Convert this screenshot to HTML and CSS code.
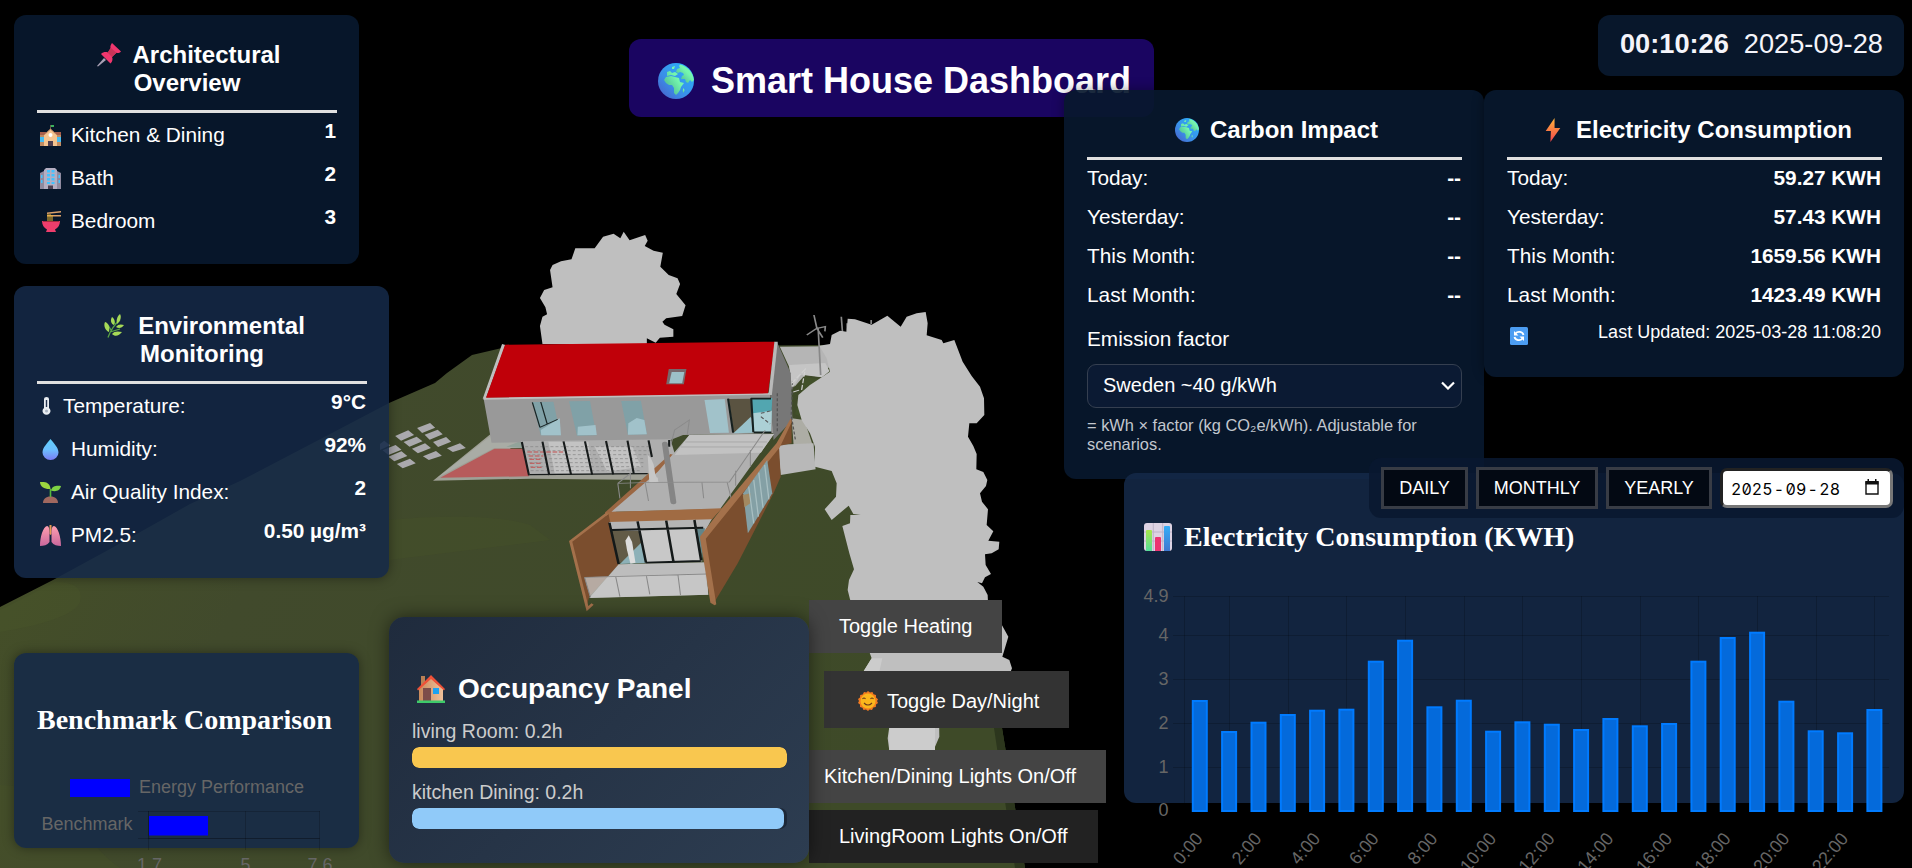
FILE: index.html
```html
<!DOCTYPE html>
<html lang="en">
<head>
<meta charset="utf-8">
<title>Smart House Dashboard</title>
<link rel="stylesheet" href="styles.css">
</head>
<body>
<svg class="defs" width="0" height="0">
  <defs>
    <linearGradient id="gSea" x1="1" y1="0" x2="0" y2="1"><stop offset="0" stop-color="#29b6ff"/><stop offset=".6" stop-color="#3a8fe8"/><stop offset="1" stop-color="#4a5bc8"/></linearGradient>
    <linearGradient id="gLand" x1="1" y1="0" x2="0" y2="1"><stop offset="0" stop-color="#7dffb0"/><stop offset=".4" stop-color="#74f5ae"/><stop offset="1" stop-color="#3fa58a"/></linearGradient>
    <linearGradient id="gBolt" x1="0" y1="0" x2="0" y2="1"><stop offset="0" stop-color="#ffb53a"/><stop offset="1" stop-color="#f5444d"/></linearGradient>
    <linearGradient id="gDrop" x1="0" y1="0" x2="0" y2="1"><stop offset="0" stop-color="#5fd0fb"/><stop offset=".5" stop-color="#6cc0ff"/><stop offset="1" stop-color="#7a7cf5"/></linearGradient>
    <linearGradient id="gLung" x1="0" y1="0" x2="0" y2="1"><stop offset="0" stop-color="#ff9fb0"/><stop offset="1" stop-color="#c9679c"/></linearGradient>
    <linearGradient id="gWall" x1="0" y1="0" x2="1" y2="0"><stop offset="0" stop-color="#c98a5c"/><stop offset="1" stop-color="#efc09a"/></linearGradient>
    <linearGradient id="gGreenBar" x1="0" y1="0" x2="0" y2="1"><stop offset="0" stop-color="#a8e84a"/><stop offset="1" stop-color="#55dd9a"/></linearGradient>
    <linearGradient id="gBlueBar" x1="0" y1="0" x2="0" y2="1"><stop offset="0" stop-color="#35aef8"/><stop offset="1" stop-color="#3f78d0"/></linearGradient>
  </defs>
  <symbol id="globe" viewBox="0 0 36 36">
    <circle cx="18" cy="18" r="18" fill="url(#gSea)"/>
    <path fill="url(#gLand)" d="M22 1.500C29 3 35 9 36 17l-2 2-2-2-2 3-2-1-1-3h-4l1-3 2-1-1-2-3-1-2 1-2-1 1-3 3-1-1-2z"/>
    <path fill="url(#gLand)" d="M14 4l3-1-1 3-2 0zM9 9l3-1 2 2 3-1 3 2-3 2-4-1-4 1zM8 14l5-1 4 1 4 1 1 4 4 1-3 4-1 3-2 3-2 2-2-2 0-5-2-3-3 0-3-2-2-3z"/>
    <path fill="url(#gLand)" d="M25.500 25l1 2-1 3-1-2z"/>
  </symbol>
  <symbol id="pin" viewBox="0 0 24 24">
    <path d="M1 23.500L0 23l7-8 2 2z" fill="#a9a0b4"/>
    <path d="M4 11c2-2 5-2.500 7-1.500L13.500 5c-.5-1.500.3-3.500 1.500-5L24 8.500c-1.500 1.500-3 1.800-4.500 1.300L15 14c1 2 .5 4.500-1.500 6.500z" fill="#f0376e"/>
    <path d="M10.500 9.500L14 5l5.500 4.800L15 14z" fill="#c93458"/>
  </symbol>
  <symbol id="leaf" viewBox="0 0 24 24">
    <path d="M5 23.500C8 15 12 10 17 6M7 18l10-3M8 16L5 11M12 10l-2-5" stroke="#59a344" stroke-width="1.300" fill="none"/>
    <g fill="#a6d957"><path d="M2 8c4 1 5 6 4 10-3-1-6-6-4-10zM9 3c3 2 3 5 2 8-3-1-4-5-2-8zM17 0c2 3 0 8-3 10-1-3 0-8 3-10zM13 13c2-3 5-3 8-2-2 3-5 4-8 2zM9 20c2-3 6-3 10-2-3 4-7 5-10 2z"/></g>
  </symbol>
  <symbol id="school" viewBox="0 0 21 21">
    <path d="M11 0h3v2h-3z" fill="#3cb35c"/><path d="M10.500 0v5" stroke="#775" stroke-width=".8"/>
    <path d="M0 9h21v12H0z" fill="#c08b62"/><path d="M0 7h6v3H0zM15 7h6v3h-6z" fill="#a85f4b"/>
    <path d="M4 10l6.500-6L17 10v11H4z" fill="#f5c48f"/><path d="M4 10l6.500-6L17 10" stroke="#bd805d" fill="none"/>
    <path d="M0 12h4v5H0zM17 12h4v5h-4z" fill="#46bdf2"/><path d="M8 16h5v5H8z" fill="#4d3d4e"/><circle cx="10.500" cy="10" r="2" fill="#fff"/>
  </symbol>
  <symbol id="office" viewBox="0 0 21 21">
    <path d="M0 5l4-2h13l4 2v16H0z" fill="#8f8a9f"/><path d="M4 2l2-2h9l2 2v19H4z" fill="#b4aec2"/>
    <path d="M7 2h3v2.500H7zM11.500 2h3v2.500h-3zM7 6h3v2.500H7zM11.500 6h3v2.500h-3zM7 10h3v2.500H7zM11.500 10h3v2.500h-3zM7 14h3v2H7zM11.500 14h3v2h-3zM1 7h1.500v3H1zM1 12h1.500v3H1zM18.500 7H20v3h-1.500zM18.500 12H20v3h-1.500z" fill="#41c3ff"/>
    <path d="M8 17.500h5V21H8z" fill="#4a4052"/>
  </symbol>
  <symbol id="noodles" viewBox="0 0 21 21">
    <path d="M7 1.500L21 0v1.500L7 3zM7 4h14v1.500L7 5.500z" fill="#d9a06b"/><path d="M8 3v8M10 3v8M12 4v7" stroke="#f0b82e" stroke-width="1"/>
    <path d="M2 10h18c0 4-2 7-5 8.500l1 2.500H6l1-2.500C4 17 2 14 2 10z" fill="#ee3d6c"/><path d="M3 10h16v1H3z" fill="#a82c3e"/>
  </symbol>
  <symbol id="thermo" viewBox="0 0 8 18">
    <path d="M1.500 2a2.500 2 0 015 0v9a4 3.800 0 11-5 0z" fill="#e9edf2"/><path d="M4 3v7" stroke="#24344f" stroke-width="1.400"/><circle cx="4" cy="14" r="1.500" fill="#aab4c2"/>
  </symbol>
  <symbol id="drop" viewBox="0 0 16 21"><path d="M8 0c3 4 8 8.500 8 13.500a8 7.500 0 01-16 0C0 8.500 5 4 8 0z" fill="url(#gDrop)"/></symbol>
  <symbol id="sprout" viewBox="0 0 21 21">
    <path d="M3 21c0-4 3-6.500 7.500-6.500S18 17 18 21z" fill="#a0685f"/><path d="M10.500 15V7" stroke="#57b83e" stroke-width="1.600"/>
    <path d="M0 0c6-.5 10 1 10.500 7C5 7.500 0 5 0 0z" fill="#9bd63f"/><path d="M21 4c-5-.5-9 0-10 4.500 4.500 1.500 9 .5 10-4.500z" fill="#7ed344"/>
  </symbol>
  <symbol id="lungs" viewBox="0 0 21 21">
    <path d="M9.500 0h2v9l-1 1-1-1z" fill="#e79c52"/>
    <path d="M7 1c2 0 2.500 3 2.500 7v9c-2 3-6 4-9.500 4C0 12 3 2 7 1zM14 1c-2 0-2.500 3-2.500 7v9c2 3 6 4 9.500 4 0-9-3-19-7-20z" fill="url(#gLung)"/>
  </symbol>
  <symbol id="bolt" viewBox="0 0 14 23"><path d="M8.500 0L0 12.500h5L4.500 23 14 9.500H8.500z" fill="url(#gBolt)"/></symbol>
  <symbol id="refresh" viewBox="0 0 18 18">
    <rect width="18" height="18" rx="1.500" fill="#4c9df2"/>
    <path d="M5.500 6.500A4.500 4 0 0113.500 8M12.500 11.500A4.500 4 0 014.500 10" stroke="#fff" stroke-width="1.800" fill="none"/><path d="M4 4v4.500h4.500zM14 14V9.500H9.500z" fill="#fff"/>
  </symbol>
  <symbol id="chartIcon" viewBox="0 0 28 28">
    <rect width="28" height="28" rx="3" fill="#ddd3e3"/><path d="M9.300 0v28M18.700 0v28M0 9h28M0 18h28" stroke="#bfb4c8" stroke-width="1"/>
    <path d="M2 8q0-1 1-1h4q1 0 1 1v20H2z" fill="url(#gGreenBar)"/><path d="M11 15q0-1 1-1h4q1 0 1 1v13h-6z" fill="#ec3470"/><path d="M20 4q0-1 1-1h4q1 0 1 1v24h-6z" fill="url(#gBlueBar)"/>
  </symbol>
  <symbol id="home" viewBox="0 0 28 28">
    <path d="M4 1h4v10H4z" fill="#b98055"/><path d="M2 14L14 3l12 11v12H2z" fill="url(#gWall)"/>
    <path d="M0 14L14 0l14 14-1 1.500L14 4 1 15.500z" fill="#ef5138"/><path d="M6 13h8v13H6z" fill="#7d4d4a"/><path d="M16 13h6v6h-6z" fill="#1ca2f2"/><path d="M0 25.500h28V28H0z" fill="#3ecb6a"/>
  </symbol>
  <symbol id="sun" viewBox="0 0 20 20">
    <path d="M10 0l2 1.500L14.500 1l1 2.300 2.500.7v2.600l2 1.600L19 10l1 2-2 1.500-.2 2.500-2.500.6L14 19l-2.300-.5L10 20l-2-1.500-2.500.5-1-2.300L2 16v-2.600L0 12l1-2-1-2 2-1.500L2.200 4l2.500-.6L6 1l2.300.5z" fill="#f47b20"/>
    <circle cx="10" cy="10" r="7.500" fill="#fbb61c"/><path d="M4.500 8q1.500-2 3 0M12.500 8q1.500-2 3 0M6 12q4 4 8 0" stroke="#6b3b1c" stroke-width="1.100" fill="none"/>
  </symbol>
</svg>

<svg class="scene" viewBox="0 0 1912 868">
  <defs><linearGradient id="grass" x1="0" y1="0" x2="1" y2=".3"><stop offset="0" stop-color="#465126"/><stop offset=".35" stop-color="#414a2c"/><stop offset="1" stop-color="#3e4a28"/></linearGradient></defs>
  <path fill="url(#grass)" d="M0 607L53 580 110 549 190 504 240 481 330 434 389 403 435 383 447 373 472 355 502 348 830 345 960 600 1002 728 1025 868H0z"/>
  <path fill="#48542a" opacity=".5" d="M0 610L55 582q30 0 25 20-8 18-80 30z"/>
  <path fill="#475228" opacity=".35" d="M389 520C440 515 500 515 530 525L550 540 389 560zM0 785q60 0 80 40 20 30 40 43H0z"/>
  <path fill="#2c361d" d="M994 728h8l23 140h-10z"/>
  <g transform="translate(380 200) scale(.42089 .33333)">
    <path fill="#bfbfbf" d="M386 432L380 378 386 350 397 343 393 322 380 294 390 270 410 262 404 210 410 195 430 184 455 178 464 145 510 145 530 110 555 101 571 115 579 95 593 121 630 105 636 122 629 138 650 152 672 158 666 200 686 225 707 235 713 252 704 282 726 316 718 348 680 355 671 365 676 374 697 388 697 410 665 413 655 428 634 415V434z"/>
    <path fill="#b5b5b5" d="M950 440L1060 439 1068 500 1045 530 1010 524 985 560 972 500z"/><path fill="#c5c5c5" d="M972 495l86-6 10 25-18 18-50-8-22 45z"/>
    <path fill="#41502a" d="M1010 530l34 8-34 45-4 70-20-10z"/>
    <path fill="#adada5" d="M978 655l30 5 20 75-45 5z"/>
    <path fill="#b8b8b8" d="M945 734l85-4 5 78-83 17z"/>
    <g stroke="#888" stroke-width="4" fill="none"><path d="M1041 385l6 140M1031 345l7 40-24 20M1038 385l20-5-1 14M1038 385l14 28M1096 350l3 50M1110 370v30M1167 360v12"/></g>
    <g fill="#aaa9ad">
      <path d="M88 684l31-15 12 14-31 16zM106 704l31-15 12 14-31 16zM126 726l31-15 12 14-31 16zM159 745l31-15 14 14-31 12zM36 708l31-17 14 14-31 17zM56 726l31-16 14 14-31 16zM76 746l31-16 14 14-31 16zM102 769l31-16 14 14-31 13zM0 732l10-10 14 14-24 14zM6 751l31-16 14 14-31 16zM20 770l31-16 14 14-31 16zM40 792l31-16 14 14-31 15z"/>
    </g>
    <path fill="#9fa096" d="M265 700L126 842 360 836 640 840 655 820 360 825 300 730z"/>
    <path fill="#a9aca5" d="M265 706L138 832 270 745 335 744V720z"/>
    <path fill="#b75b5b" d="M272 746H340L354 829 143 833z"/><path fill="#92a39a" d="M300 740l30-15h10v20z"/>
    <path fill="#999" d="M246 595L927 580 935 700 720 705 690 720 265 728z"/>
    <path fill="#aeaeae" d="M335 724L690 718 700 760 640 820 355 826z"/>
    <path fill="#d0d0d0" opacity=".6" d="M400 725h95l10 95h-90zM510 740h90l20 60-80 15z"/>
    <g stroke="#8a8a8a" stroke-width="2" stroke-dasharray="7 5"><path d="M345 740H640M350 752H650M350 764H640M354 776H630M355 788H630M357 800H625M358 812H620"/></g>
    <g stroke="#c34f4f" stroke-width="3" stroke-dasharray="11 4"><path d="M350 756h85M353 768h35M355 778h30M356 790h28M358 802h26"/></g>
    <g stroke="#171b1b" stroke-width="5" fill="none"><path d="M337 726l17 100M386 725l16 100M436 724l18 100M487 724l17 100M537 723l17 100M588 722l15 100M638 721l8 50M687 720v20"/><path d="M356 824l280-3" stroke-width="4"/></g>
    <path fill="#bfbfbf" d="M290 432l8 3-46 158-8 3zM246 592L928 578v6L246 599z"/>
    <path fill="#c00009" d="M297 434L938 425 922 580 252 593z"/>
    <path fill="#777" d="M943 425L976 520 980 660 935 720 927 580z"/><path fill="#b9b9b9" d="M937 425h8l-14 160h-8z"/>
    <path fill="#77676b" d="M686 507h42l-6 46h-42z"/><path fill="#9cc0c8" d="M693 516h30l-5 34h-31z"/>
    <g fill="#80a1a7"><path d="M362 606l50-1 17 101h-47zM449 604l50-1 15 103-46 1zM573 603l47-1 14 101-45 1z"/></g><g fill="#a1c2ca"><path d="M382 690l45-35 3 51h-47zM470 680l42-5 3 30-46 1zM590 670l20-16 18 6 6 43-45 1zM771 600l48-3 10 101-45 1z"/></g>
    <path stroke="#192525" stroke-width="3" fill="none" d="M382 606l15 65M380 682l42-24M362 607l18 75"/>
    <path fill="#5a5341" d="M829 597l52-1 2 57-43 46z"/><path fill="#99c2cb" d="M840 700l41-50 5 48z"/><path fill="#52a6b0" d="M882 596l50-2-4 100-40 2z"/><path fill="#acd0d5" d="M886 640l45-8-2 65-40 1z"/>
    <path stroke="#16201f" stroke-width="5" fill="none" d="M827 596l12 102M882 595l5 102M881 596h48M888 697h42"/>
    <path stroke="#555" stroke-width="3" stroke-dasharray="9 6" fill="none" d="M944 580v115M980 545l-3 100 10 75M905 640l25-8M905 650l22 22"/>
    <path stroke="#d1d1d1" stroke-width="3" fill="none" stroke-dasharray="15 5" d="M978 550l32-42-8 60-25 10"/>
    <path fill="#9b6743" d="M690 762L706 768 560 935 812 925 786 962 540 969 535 937z"/>
    <path fill="#b0b0b0" d="M735 705L936 702 808 927 550 935 660 815z"/><path fill="#c2c2c2" d="M735 705L936 702 905 758 700 765zM646 830l15 3-2 14-18 2z"/><path stroke="#a1a1a1" stroke-width="2" d="M725 726h195M715 741h195"/>
    <path fill="#c7c7c7" d="M636 765l7 8 7 20 4 30 8 22-22 4z"/><path stroke="#858585" stroke-width="14" stroke-linecap="round" d="M677 732l20 174"/>
    <g stroke="#8a8a8a" stroke-width="2.500" fill="none"><path d="M565 850l80-3 185-1 85-155M565 850l5 45M630 848l8 55M765 848l4 47M825 848l10 50M845 812v45M880 750v50M690 740l10-50 35-30-5 45M565 850l30-30v45"/></g>
    <path fill="#a06b43" d="M535 937L812 925 786 960 540 967z"/>
    <path fill="#7b4e2e" d="M452 1024L543 942 567 1094 497 1190 490 1224z"/><path stroke="#a4714b" stroke-width="7" fill="none" d="M540 940L453 1024 493 1226 505 1212"/>
    <path fill="#b5b5b5" d="M544 966L788 958 766 1008 550 990z"/><path fill="#625b47" d="M552 992h62l12 55-60 45z"/><path fill="#8db1b8" d="M570 1092l54-68 10 65z"/><path fill="#61858a" d="M752 985h20l-6 90z"/><path fill="#c8c8c8" d="M618 992l130-6 18 98-132 5z"/>
    <path stroke="#141919" stroke-width="6" fill="none" d="M545 968l22 124M612 964l20 124M680 962l17 122M747 960l16 122M550 990l218-7M632 1088l130-5"/>
    <path fill="#ddd" d="M583 1022l8-16 8 20 8 62-12 3-8-40z"/>
    <path fill="#bdbdbd" d="M567 1093L775 1087 780 1184 497 1194z"/><path fill="#cacaca" d="M486 1132l286-12 8 64-280 9z" opacity=".75"/><path stroke="#888" stroke-width="2.500" fill="none" d="M486 1132L775 1122M486 1132l14 60M560 1130l10 60M633 1128l8 55M708 1125l6 60"/>
    <path fill="#7b4e2e" d="M764 1012L812 930 945 735 978 656V730L948 738 952 830 935 880 850 1090 792 1212z"/><path fill="#a4714b" d="M760 1010l52-85 130-195 34-75 2 12-28 75-176 274 25 197-4 3-10-8z"/>
    <path fill="#84a0a5" d="M863 880L920 780 932 880 874 1000z"/><path fill="#a38961" d="M862 885l18-5v30l-14 12z"/><path stroke="#a8bfc2" stroke-width="3" d="M876 860l12 110M888 840l11 110M900 818l10 105M914 795l10 103"/>
  </g>
  <g transform="translate(780 290) scale(.33333)">
    <path fill="#bfbfbf" d="M118 167L150 162 155 135 180 122 200 125 203 86 225 88 275 104 322 77 362 110 380 80 410 70 437 66 443 100 440 136 485 150 490 160 523 150 548 215 575 258 600 290 612 325 613 375 590 400 568 400 564 440 580 468 590 492 589 538 610 546 622 570 618 588 600 610 606 635 624 658 620 705 640 724 625 752 658 755 656 778 635 790 615 793 617 825 633 852 615 862 606 880 592 876 610 890 623 915 625 960 664 1002 685 1040 667 1100 688 1110 696 1135 690 1150H475L478 1340 460 1382H328L323 1345 328 1310 250 1145 275 1105 210 928 203 900 207 870 222 838 208 790 187 708 210 700 211 675 242 675 220 672 206 647 155 690 134 658 168 620 170 580 155 543 105 530V470L90 430 65 390 52 345 55 315 90 285 150 245 140 205z"/>
    <path fill="#ccc" d="M275 1105h32l-10 45h-50zM328 1310H465V1382H328z"/>
  </g>
</svg>

<main class="hud">
  <h1 class="banner"><svg class="i36"><use href="#globe"/></svg>Smart House Dashboard</h1>

  <section class="col-left">
    <div class="panel deep arch">
      <h3><svg class="i24"><use href="#pin"/></svg>Architectural<br>Overview</h3>
      <div class="row tall"><span class="label"><svg class="i21"><use href="#school"/></svg>Kitchen &amp; Dining</span><b>1</b></div>
      <div class="row tall"><span class="label"><svg class="i21"><use href="#office"/></svg>Bath</span><b>2</b></div>
      <div class="row tall"><span class="label"><svg class="i21"><use href="#noodles"/></svg>Bedroom</span><b>3</b></div>
    </div>
    <div class="panel navy env">
      <h3><svg class="i24"><use href="#leaf"/></svg>Environmental<br>Monitoring</h3>
      <div class="row tall"><span class="label narrow"><svg class="i21"><use href="#thermo"/></svg>Temperature:</span><b>9°C</b></div>
      <div class="row tall"><span class="label"><svg class="i21"><use href="#drop"/></svg>Humidity:</span><b>92%</b></div>
      <div class="row tall"><span class="label"><svg class="i21"><use href="#sprout"/></svg>Air Quality Index:</span><b>2</b></div>
      <div class="row tall"><span class="label"><svg class="i21"><use href="#lungs"/></svg>PM2.5:</span><b>0.50 µg/m³</b></div>
    </div>
    <div class="panel navy bench">
      <h3 class="serif">Benchmark Comparison</h3>
      <svg class="bench-chart" width="300" height="120">
        <rect x="33" y="14" width="60" height="18" fill="#00f"/>
        <text x="102" y="28">Energy Performance</text>
        <text x="4.500" y="65">Benchmark</text>
        <path class="grid" d="M101 46.500h182M101 73.500h182M111.500 46v39M208.500 46v39M282.500 46v39"/>
        <path class="grid" d="M111.500 46v27.500h171"/>
        <rect x="112" y="51" width="59" height="19.500" fill="#00f"/>
        <g text-anchor="middle"><text x="112.500" y="106">1.7</text><text x="208.500" y="106">5</text><text x="283" y="106">7.6</text></g>
      </svg>
    </div>
  </section>

  <section class="occupancy">
    <h3><svg class="i28"><use href="#home"/></svg>Occupancy Panel</h3>
    <p>living Room: 0.2h</p>
    <div class="track"><div class="fill amber" style="width:100%"></div></div>
    <p>kitchen Dining: 0.2h</p>
    <div class="track"><div class="fill sky" style="width:99.2%"></div></div>
  </section>

  <section class="actions">
    <button class="heat">Toggle Heating</button>
    <button class="day"><svg class="i20"><use href="#sun"/></svg>Toggle Day/Night</button>
    <button class="kitchen">Kitchen/Dining Lights On/Off</button>
    <button class="living">LivingRoom Lights On/Off</button>
  </section>

  <section class="col-right">
    <div class="clock"><b>00:10:26</b><span>2025-09-28</span></div>
    <div class="stats">
      <div class="panel deep carbon">
        <h3><svg class="i24"><use href="#globe"/></svg>Carbon Impact</h3>
        <div class="row"><span>Today:</span><b>--</b></div>
        <div class="row"><span>Yesterday:</span><b>--</b></div>
        <div class="row"><span>This Month:</span><b>--</b></div>
        <div class="row"><span>Last Month:</span><b>--</b></div>
        <div class="factor">Emission factor</div>
        <div class="select"><span>Sweden ~40 g/kWh</span><svg width="14" height="9" viewBox="0 0 14 9"><path d="M1 1.500l6 6 6-6" stroke="#fff" stroke-width="2.200" fill="none"/></svg></div>
        <p class="note">= kWh × factor (kg CO₂e/kWh). Adjustable for scenarios.</p>
      </div>
      <div class="panel deep elec">
        <h3><svg class="i24"><use href="#bolt"/></svg>Electricity Consumption</h3>
        <div class="row"><span>Today:</span><b>59.27 KWH</b></div>
        <div class="row"><span>Yesterday:</span><b>57.43 KWH</b></div>
        <div class="row"><span>This Month:</span><b>1659.56 KWH</b></div>
        <div class="row"><span>Last Month:</span><b>1423.49 KWH</b></div>
        <div class="updated"><svg class="i18"><use href="#refresh"/></svg><span>Last Updated: 2025-03-28 11:08:20</span></div>
      </div>
    </div>
  </section>

  <section class="usage">
    <h3 class="serif"><svg class="i28"><use href="#chartIcon"/></svg>Electricity Consumption (KWH)</h3>
    <svg class="usage-chart" id="usage" width="780" height="308"></svg>
  </section>
  <div class="range">
    <button class="w-day">DAILY</button><button class="w-month">MONTHLY</button><button class="w-year">YEARLY</button>
    <div class="date"><span>2025</span><i>-</i><span>09</span><i>-</i><span>28</span>
      <svg width="14" height="16" viewBox="0 0 14 16"><path d="M1 3h12v12H1z" fill="none" stroke="#111" stroke-width="1.400"/><path d="M.5 2h13v3.500H.5zM2.500 0h1.500v3H2.500zM10 0h1.500v3H10z" fill="#111"/></svg>
    </div>
  </div>
</main>
<script src="chart.js"></script>
</body>
</html>
```
FILE: styles.css
```css
* { box-sizing: border-box; }
body { margin: 0; background: #000; color: #fff; overflow: hidden; height: 868px; font-family: "Liberation Sans", Arial, sans-serif; }
h1, h3, p { margin: 0; }
.defs { position: absolute; }
.scene { position: absolute; left: 0; top: 0; width: 1912px; height: 868px; }
.i18 { width: 18px; height: 18px; }
.i20 { width: 20px; height: 20px; }
.i21 { width: 21px; height: 21px; }
.i24 { width: 24px; height: 24px; }
.i28 { width: 28px; height: 28px; }
.i36 { width: 36px; height: 36px; }

.hud { position: relative; display: flex; height: 868px; padding: 15px 8px 0 14px; }
.banner { position: absolute; left: 629px; top: 39px; width: 525px; height: 78px; display: flex; align-items: center; gap: 17px; padding: 5px 0 0 29px; border-radius: 12px; background: #1a0561; font-size: 36px; line-height: 42px; white-space: nowrap; }

.panel { border-radius: 12px; padding: 22px 22px 22px 23px; box-shadow: 0 0 12px rgba(0,0,0,.4); }
.deep { background: rgba(8,24,46,.92); }
.navy { background: rgba(21,41,72,.88); }
.panel h3 { font-size: 24px; line-height: 28px; text-align: center; }
.panel h3:not(.serif) { padding: 4px 0 13px; border-bottom: 3px solid #e0e0e0; margin-bottom: 6px; }
.panel h3 svg { vertical-align: -4px; margin: -4px 11px 0 4px; }
.row { display: flex; justify-content: space-between; height: 39px; font-size: 20.8px; line-height: 24px; }
.row.tall { height: 43px; }
.row b { margin-right: 1px; }
.label { display: flex; align-items: center; gap: 10px; height: 24px; margin: 4px 0 0 3px; }
.label.narrow { gap: 6px; }
.label.narrow svg { margin-left: -4px; height: 18px; }

.col-left { display: flex; flex-direction: column; align-items: flex-start; width: 375px; flex: none; }
.arch { width: 345px; height: 249px; }
.env { width: 375px; height: 292px; margin-top: 22px; }
.bench { width: 345px; height: 195px; margin-top: 75px; padding-top: 51px; }
.serif { font-family: "Liberation Serif", "Times New Roman", serif; }
.panel h3.serif { font-size: 28px; line-height: 32px; text-align: left; white-space: nowrap; }
.bench-chart { display: block; margin-top: 29px; overflow: visible; }
svg text { font: 18px "Liberation Sans", Arial, sans-serif; fill: #666; }
.grid { stroke: rgba(0,0,0,.18); fill: none; }

.occupancy { position: relative; z-index: 2; flex: none; width: 420px; height: 246px; margin-top: 602px; padding: 56px 22px 0 23px; border-radius: 15px; background: linear-gradient(135deg, #1f2b3d, #2d3d51); box-shadow: 0 0 18px rgba(0,0,0,.5); }
.occupancy h3 { display: flex; align-items: center; gap: 13px; padding-left: 5px; font-size: 28px; line-height: 32px; }
.occupancy p { margin-top: 15px; font-size: 19.5px; line-height: 22px; height: 27px; color: #ccc; }
.track { height: 21px; border-radius: 7px; background: #1d2838; overflow: hidden; }
.occupancy .track + p { margin-top: 13px; }
.fill { height: 21px; border-radius: 7px; }
.amber { background: #f9c74f; }
.sky { background: #90caf9; }

.actions { display: flex; flex-direction: column; align-items: flex-start; flex: none; width: 255px; padding-top: 585px; }
.actions button { display: flex; align-items: center; flex: none; height: 53px; padding: 0 0 0 30px; border: 0; background: #444; color: #fff; font: 20px "Liberation Sans", Arial, sans-serif; white-space: nowrap; }
.actions .heat { width: 193px; }
.actions .day { width: 245px; height: 57px; margin: 18px 0 22px 15px; padding: 3px 0 0 34px; gap: 9px; background: #333; }
.actions .kitchen { width: 312px; margin-left: -15px; }
.actions .living { width: 289px; margin-top: 7px; background: #222; }

.col-right { position: relative; display: flex; flex-direction: column; align-items: flex-end; flex: none; width: 840px; }
.clock { display: flex; gap: 15px; width: 306px; height: 61px; padding: 13px 0 0 22px; border-radius: 12px; background: #08172b; font-size: 27.2px; line-height: 31px; color: #f4f4fa; }
.stats { display: flex; align-items: flex-start; margin-top: 14px; }
.carbon { width: 420px; height: 389px; }
.elec { width: 420px; height: 287px; }
.factor { margin-top: 5px; font-size: 20.8px; line-height: 24px; }
.select { display: flex; align-items: center; justify-content: space-between; height: 44px; margin-top: 13px; padding: 0 6px 2px 15px; border: 1px solid #353f50; border-radius: 9px; background: #0b1a33; font-size: 20px; }
.note { margin-top: 8px; font-size: 16.4px; line-height: 19px; color: #c2c7ce; }
.updated { display: flex; justify-content: space-between; font-size: 18px; line-height: 21px; padding-right: 1px; }
.updated svg { margin: 5px 0 0 3px; }

.usage { position: absolute; left: 1124px; top: 473px; width: 780px; height: 330px; border-radius: 12px; background: rgba(21,41,72,.88); padding-top: 47px; }
.usage h3 { display: flex; align-items: center; gap: 12px; padding: 1px 0 0 20px; font-size: 28px; line-height: 32px; height: 32px; }
.usage-chart { display: block; overflow: visible; }
.usage-chart .bar { fill: #046adb; stroke: #007bff; stroke-width: 2; }
.range { position: absolute; left: 1369px; top: 458px; width: 535px; height: 60px; display: flex; align-items: flex-start; gap: 8px; padding: 9px 12px; border-radius: 12px; background: rgba(9,24,48,.88); }
.range button { flex: none; height: 42px; padding: 0; border: 3px solid #383c45; background: #030913; color: #fff; font: 18px "Liberation Sans", Arial, sans-serif; }
.range .w-day { width: 87px; }
.range .w-month { width: 122px; }
.range .w-year { width: 106px; }
.date { display: flex; align-items: center; flex: none; width: 173px; height: 40px; margin-top: 1px; padding: 2px 11px 0 8px; border: 3px solid; border-color: #222 #777 #777 #222; border-radius: 7px; background: #fff; color: #000; font: 400 16px Inter, sans-serif; font-feature-settings: "zero", "tnum"; }
.date i { width: 13px; text-align: center; font-style: normal; }
.date svg { margin: -4px 0 0 auto; }
```
FILE: chart.js
```js
const tops = [700, 731, 721.7, 714, 709.7, 708.7, 660.7, 639.7, 706.3, 699.7, 730.7, 721.3,
  723.7, 729, 718, 725.3, 723, 660.7, 637, 631.7, 700.7, 730.3, 732.3, 709];
const svg = document.getElementById('usage');
const originX = 1124, originY = 552, base = 811;
let out = '';
[['4.9', 596.5], ['4', 635.5], ['3', 679.5], ['2', 723.5], ['1', 767.5], ['0', 811]].forEach(([t, y]) => {
  out += `<path class="grid" d="M${1173 - originX} ${y - originY}H${1889 - originX}"/>`;
  out += `<text text-anchor="end" x="${1168.5 - originX}" y="${y - originY + 5}">${t}</text>`;
});
out += `<path class="grid" d="M${1184.5 - originX} ${596 - originY}V${base - originY}"/>`;
tops.forEach((top, i) => {
  const cx = 1199.8 - originX + i * 29.33;
  if (i % 2) out += `<path class="grid" d="M${Math.round(cx) + .5} ${596 - originY}V${base - originY}"/>`;
  out += `<rect class="bar" x="${(cx - 7).toFixed(1)}" y="${top - originY + 1}" width="14" height="${base - top - 1}"/>`;
  if (i % 2 === 0) out += `<text text-anchor="end" transform="translate(${(cx + 4).toFixed(1)} ${839 - originY}) rotate(-50)">${i}:00</text>`;
});
svg.innerHTML = out;
```
